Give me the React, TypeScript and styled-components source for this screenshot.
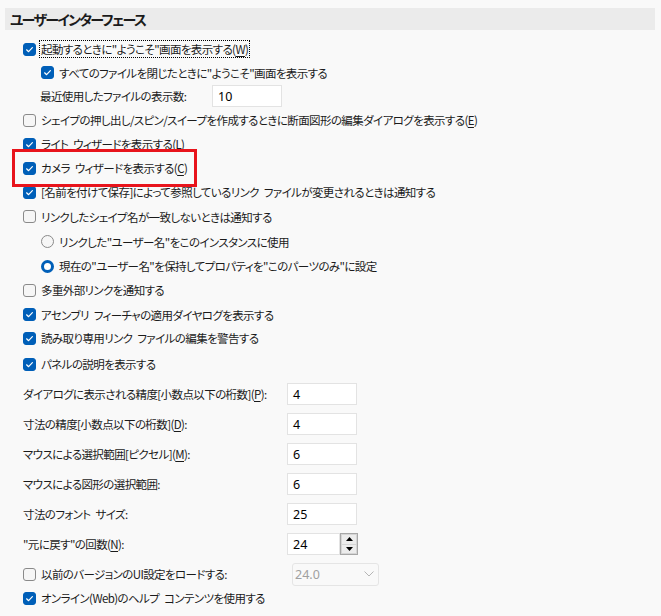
import React from "react";
import styled, { createGlobalStyle } from "styled-components";

const GlobalStyle = createGlobalStyle`
  html, body {
    margin: 0;
    padding: 0;
    background: #f9f9f9;
  }
  body {
    font-family: "Noto Sans CJK JP", "Noto Sans", sans-serif;
    font-size: 11.5px;
    letter-spacing: -0.6px;
    word-spacing: 3px;
    color: #1b1b1b;
    font-feature-settings: "palt";
  }
`;

type Item =
  | { kind: "check"; text: React.ReactNode; checked: boolean; indent?: number; h: number; focus?: boolean; mark?: boolean }
  | { kind: "radio"; text: React.ReactNode; checked: boolean; indent?: number; h: number }
  | { kind: "field"; text: React.ReactNode; value: string; indent?: number; h: number; labelW: number; spin?: boolean };

const K = ({ children }: { children: React.ReactNode }) => <Key>{children}</Key>;

const items: Item[] = [
  { kind: "check", checked: true, h: 24, focus: true, text: <>起動するときに"ようこそ"画面を表示する(<K>W</K>)</> },
  { kind: "check", checked: true, h: 23, indent: 1, text: <>すべてのファイルを閉じたときに"ようこそ"画面を表示する</> },
  { kind: "field", value: "10", h: 24, indent: 1, labelW: 172, text: <>最近使用したファイルの表示数:</> },
  { kind: "check", checked: false, h: 24, text: <>シェイプの押し出し/スピン/スイープを作成するときに断面図形の編集ダイアログを表示する(<K>E</K>)</> },
  { kind: "check", checked: true, h: 24, text: <>ライト ウィザードを表示する(<K>L</K>)</> },
  { kind: "check", checked: true, h: 24, mark: true, text: <>カメラ ウィザードを表示する(<K>C</K>)</> },
  { kind: "check", checked: true, h: 24, text: <>[名前を付けて保存]によって参照しているリンク ファイルが変更されるときは通知する</> },
  { kind: "check", checked: false, h: 25, text: <>リンクしたシェイプ名が一致しないときは通知する</> },
  { kind: "radio", checked: false, h: 25, indent: 1, text: <>リンクした"ユーザー名"をこのインスタンスに使用</> },
  { kind: "radio", checked: true, h: 24, indent: 1, text: <>現在の"ユーザー名"を保持してプロパティを"このパーツのみ"に設定</> },
  { kind: "check", checked: false, h: 24, text: <>多重外部リンクを通知する</> },
  { kind: "check", checked: true, h: 25, text: <>アセンブリ フィーチャの適用ダイヤログを表示する</> },
  { kind: "check", checked: true, h: 22, text: <>読み取り専用リンク ファイルの編集を警告する</> },
  { kind: "check", checked: true, h: 30, text: <>パネルの説明を表示する</> },
  { kind: "field", value: "4", h: 30, labelW: 264, text: <>ダイアログに表示される精度[小数点以下の桁数](<K>P</K>):</> },
  { kind: "field", value: "4", h: 30, labelW: 264, text: <>寸法の精度[小数点以下の桁数](<K>D</K>):</> },
  { kind: "field", value: "6", h: 30, labelW: 264, text: <>マウスによる選択範囲[ピクセル](<K>M</K>):</> },
  { kind: "field", value: "6", h: 30, labelW: 264, text: <>マウスによる図形の選択範囲:</> },
  { kind: "field", value: "25", h: 30, labelW: 264, text: <>寸法のフォント サイズ:</> },
  { kind: "field", value: "24", h: 30, labelW: 264, spin: true, text: <>"元に戻す"の回数(<K>N</K>):</> },
];

const CheckMark = () => (
  <svg width="13" height="13" viewBox="0 0 13 13">
    <path d="M3.6 6.8 L5.6 8.7 L9.4 4.6" fill="none" stroke="#fff" strokeWidth="1.2" strokeLinecap="round" strokeLinejoin="round" />
  </svg>
);

const Check = ({ checked }: { checked: boolean }) => (
  <CheckBox $checked={checked}>{checked && <CheckMark />}</CheckBox>
);

const Radio = ({ checked }: { checked: boolean }) => <RadioDot $checked={checked} />;

const Spinner = () => (
  <SpinCol>
    <SpinBtn>
      <svg width="7" height="4" viewBox="0 0 7 4"><path d="M0 4 L3.5 0 L7 4 Z" fill="#000" /></svg>
    </SpinBtn>
    <SpinBtn>
      <svg width="7" height="4" viewBox="0 0 7 4"><path d="M0 0 L3.5 4 L7 0 Z" fill="#000" /></svg>
    </SpinBtn>
  </SpinCol>
);

const App: React.FC = () => {
  return (
    <>
      <GlobalStyle />
      <Page>
        <Header>ユーザーインターフェース</Header>
        <List>
          {items.map((it, i) => {
            if (it.kind === "field") {
              return (
                <FieldRow key={i} $h={it.h} $indent={it.indent || 0} $labelW={it.labelW}>
                  <span>{it.text}</span>
                  <FieldWrap>
                    <NumberBox $w={it.spin ? 53 : 70}>{it.value}</NumberBox>
                    {it.spin && <Spinner />}
                  </FieldWrap>
                </FieldRow>
              );
            }
            if (it.kind === "radio") {
              return (
                <Row key={i} $h={it.h} $indent={it.indent || 0}>
                  <Radio checked={it.checked} />
                  <Label>{it.text}</Label>
                </Row>
              );
            }
            const inner = (
              <>
                <Check checked={it.checked} />
                <Label $focus={it.focus}>{it.text}</Label>
              </>
            );
            return (
              <Row key={i} $h={it.h} $indent={it.indent || 0}>
                {it.mark ? <Highlight>{inner}</Highlight> : inner}
              </Row>
            );
          })}
          <ComboRow>
            <Row $h={24} $indent={0}>
              <Check checked={false} />
              <Label>以前のバージョンのUI設定をロードする:</Label>
            </Row>
            <Combo>
              <span>24.0</span>
              <svg width="10" height="6" viewBox="0 0 10 6">
                <path d="M0.5 0.5 L5 5 L9.5 0.5" fill="none" stroke="#b5b5b5" strokeWidth="1" />
              </svg>
            </Combo>
          </ComboRow>
          <Row $h={24} $indent={0}>
            <Check checked={true} />
            <Label>オンライン(Web)のヘルプ コンテンツを使用する</Label>
          </Row>
        </List>
      </Page>
    </>
  );
};

export default App;

const Page = styled.div`
  width: 661px;
  height: 616px;
  padding-top: 8px;
  box-sizing: border-box;
  overflow: hidden;
`;

const Header = styled.div`
  margin: 0 6px 0 5px;
  height: 22px;
  background: #ebebeb;
  padding-left: 5px;
  display: flex;
  align-items: center;
  font-size: 14px;
  font-weight: 600;
  letter-spacing: -1.7px;
  color: #1b1b1b;
`;

const List = styled.div`
  display: flex;
  flex-direction: column;
  padding-top: 7px;
`;

const Row = styled.div<{ $h: number; $indent: number }>`
  height: ${(p) => p.$h}px;
  display: flex;
  align-items: center;
  padding-left: ${(p) => 23 + p.$indent * 18}px;
  white-space: nowrap;
`;

const FieldRow = styled.div<{ $h: number; $indent: number; $labelW: number }>`
  height: ${(p) => p.$h}px;
  display: grid;
  grid-template-columns: ${(p) => p.$labelW}px auto;
  align-items: center;
  padding-left: ${(p) => 23 + p.$indent * 17}px;
  white-space: nowrap;
`;

const Label = styled.span<{ $focus?: boolean }>`
  margin-left: 4px;
  line-height: 16px;
  padding: 0 1px;
  outline: ${(p) => (p.$focus ? "1px dotted #000" : "none")};
  outline-offset: 0;
`;

const Key = styled.span`
  text-decoration: underline;
  text-underline-offset: 2px;
`;

const CheckBox = styled.span<{ $checked: boolean }>`
  width: 13px;
  height: 13px;
  box-sizing: border-box;
  border-radius: 3px;
  flex: none;
  display: inline-flex;
  background: ${(p) => (p.$checked ? "#005fb8" : "#f6f6f6")};
  border: 1px solid ${(p) => (p.$checked ? "#005fb8" : "#8a8a8a")};
  svg {
    margin: -1px;
  }
`;

const RadioDot = styled.span<{ $checked: boolean }>`
  width: 13px;
  height: 13px;
  box-sizing: border-box;
  border-radius: 50%;
  flex: none;
  background: ${(p) => (p.$checked ? "#fff" : "#f6f6f6")};
  border: ${(p) => (p.$checked ? "3.5px solid #005fb8" : "1px solid #8a8a8a")};
`;

const Highlight = styled.span`
  position: relative;
  display: inline-flex;
  align-items: center;
  &::after {
    content: "";
    position: absolute;
    left: -11px;
    right: -9px;
    top: -11px;
    bottom: -11px;
    border: 3px solid #e8141c;
    pointer-events: none;
  }
`;

const FieldWrap = styled.div`
  display: flex;
  align-items: stretch;
`;

const NumberBox = styled.div<{ $w: number }>`
  width: ${(p) => p.$w}px;
  height: 22px;
  box-sizing: border-box;
  background: #fff;
  border: 1px solid #e3e3e3;
  display: flex;
  align-items: center;
  padding-left: 5px;
  font-family: "Noto Sans", "Liberation Sans", sans-serif;
  font-size: 12.5px;
  letter-spacing: 0;
  color: #000;
`;

const SpinCol = styled.div`
  width: 18px;
  display: flex;
  flex-direction: column;
  gap: 1px;
  border: 1px solid #a7a7a7;
  box-sizing: border-box;
  padding: 1px;
  background: #d5d5d5;
`;

const SpinBtn = styled.div`
  flex: 1;
  background: #ececec;
  display: flex;
  align-items: center;
  justify-content: center;
`;

const ComboRow = styled.div`
  display: grid;
  grid-template-columns: 292px auto;
  align-items: center;
  margin-top: 3px;
`;

const Combo = styled.div`
  width: 87px;
  height: 23px;
  box-sizing: border-box;
  border: 1px solid #e5e5e5;
  border-radius: 3px;
  background: #f9f9f9;
  display: flex;
  align-items: center;
  justify-content: space-between;
  padding: 0 4px 0 2px;
  color: #a0a0a0;
  font-family: "Noto Sans", "Liberation Sans", sans-serif;
  font-size: 12.5px;
  letter-spacing: 0;
`;
